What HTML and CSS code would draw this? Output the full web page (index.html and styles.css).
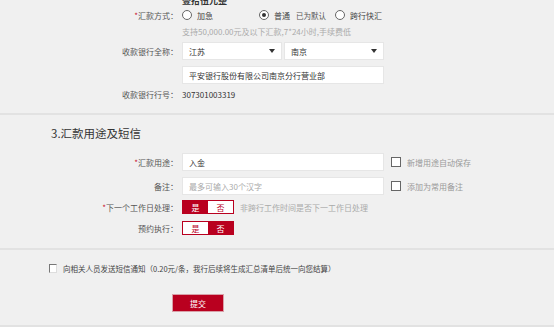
FILE: index.html
```html
<!DOCTYPE html>
<html lang="zh-CN">
<head>
  <meta charset="UTF-8">
  <title>汇款</title>
  <link rel="stylesheet" href="styles.css">
</head>
<body>
  <div class="page">
    <section class="block payee">
      <div class="row amount-row">
        <span class="label"></span>
        <b class="amount-cn">壹拾伍元整</b>
      </div>
      <div class="row mode-row">
        <span class="label"><i class="star">*</i>汇款方式：</span>
        <div class="options">
          <label class="opt first"><span class="radio"></span>加急</label>
          <label class="opt"><span class="radio on"></span>普通<small class="note">已为默认</small></label>
          <label class="opt"><span class="radio"></span>跨行快汇</label>
        </div>
      </div>
      <div class="row hint-row">
        <span class="label"></span>
        <span class="hint">支持50,000.00元及以下汇款,7*24小时,手续费低</span>
      </div>
      <div class="row select-row">
        <span class="label">收款银行全称：</span>
        <div class="selects">
          <div class="select">江苏<span class="caret"></span></div>
          <div class="select">南京<span class="caret"></span></div>
        </div>
      </div>
      <div class="row input-row">
        <span class="label"></span>
        <div class="input">平安银行股份有限公司南京分行营业部</div>
      </div>
      <div class="row code-row">
        <span class="label">收款银行行号：</span>
        <span class="value">307301003319</span>
      </div>
    </section>

    <section class="block usage">
      <h3 class="title">3.汇款用途及短信</h3>
      <div class="row field-row">
        <span class="label"><i class="star">*</i>汇款用途：</span>
        <div class="field">
          <div class="input">入金</div>
          <label class="check"><span class="box"></span>新增用途自动保存</label>
        </div>
      </div>
      <div class="row field-row memo">
        <span class="label">备注：</span>
        <div class="field">
          <div class="input placeholder">最多可输入30个汉字</div>
          <label class="check"><span class="box"></span>添加为常用备注</label>
        </div>
      </div>
      <div class="row toggle-row">
        <span class="label"><i class="star">*</i>下一个工作日处理：</span>
        <div class="field">
          <div class="toggle">
            <span class="seg on">是</span><span class="seg">否</span>
          </div>
          <span class="hint">非跨行工作时间是否下一工作日处理</span>
        </div>
      </div>
      <div class="row toggle-row second">
        <span class="label">预约执行：</span>
        <div class="toggle">
          <span class="seg">是</span><span class="seg on">否</span>
        </div>
      </div>
    </section>

    <section class="block sms">
      <label class="sms-check"><span class="box small"></span>向相关人员发送短信通知（0.20元/条，我行后续将生成汇总清单后统一向您结算）</label>
      <div class="actions">
        <button class="submit" type="button">提交</button>
      </div>
    </section>
  </div>
</body>
</html>
```

FILE: styles.css
```css
body {
  margin: 0;
  background: #fff;
  font-family: "Noto Sans CJK SC", "Noto Sans", sans-serif;
  font-size: 8px;
  color: #444;
  overflow: hidden;
}

.page {
  background: #f0f0f0;
}

.block {
  border-bottom: 2px solid #e2e2e2;
}

.row {
  display: grid;
  grid-template-columns: 178px auto;
  column-gap: 4px;
  align-items: center;
}

.label {
  text-align: right;
  color: #555;
  white-space: nowrap;
}

.star {
  font-style: normal;
  color: #c8102e;
}

/* 收款方 */
.payee {
  padding-bottom: 14px;
}

.amount-row {
  height: 12px;
  margin-top: -6px;
}

.amount-cn {
  font-size: 9px;
  font-weight: bold;
  color: #333;
}

.mode-row {
  height: 12px;
  margin-top: 3px;
}

.options {
  display: flex;
  align-items: center;
}

.opt {
  display: flex;
  align-items: center;
  margin-right: 9px;
  color: #444;
}

.opt.first {
  width: 63px;
  margin-right: 14px;
}

.radio {
  width: 8px;
  height: 8px;
  border: 1px solid #666;
  border-radius: 50%;
  background: #fff;
  margin-right: 5px;
  display: flex;
  align-items: center;
  justify-content: center;
}

.radio.on::after {
  content: "";
  width: 4px;
  height: 4px;
  border-radius: 50%;
  background: #333;
}

.note {
  font-size: 7.5px;
  color: #555;
  margin-left: 6px;
}

.hint {
  color: #aaa;
}

.hint-row {
  height: 10px;
  margin-top: 5px;
}

.select-row {
  height: 18px;
  margin-top: 6px;
}

.selects {
  display: flex;
  gap: 2px;
}

.select,
.input {
  box-sizing: border-box;
  height: 18px;
  background: #fff;
  border: 1px solid #e6e6e6;
  padding: 0 6px;
  display: flex;
  align-items: center;
  color: #333;
}

.select {
  width: 100px;
  justify-content: space-between;
}

.caret {
  width: 0;
  height: 0;
  border-left: 3px solid transparent;
  border-right: 3px solid transparent;
  border-top: 4px solid #333;
}

.input {
  width: 202px;
}

.input-row {
  height: 18px;
  margin-top: 6px;
}

.code-row {
  height: 10px;
  margin-top: 5px;
}

.value {
  color: #333;
}

/* 用途 */
.usage {
  padding-top: 11px;
  padding-bottom: 13px;
}

.title {
  margin: 0 0 0 51px;
  height: 14px;
  line-height: 14px;
  font-size: 11.5px;
  font-weight: normal;
  color: #333;
}

.field-row {
  height: 18px;
  margin-top: 13px;
}

.field-row.memo {
  margin-top: 6px;
}

.field {
  display: flex;
  align-items: center;
}

.placeholder {
  color: #aaa;
}

.check {
  display: flex;
  align-items: center;
  margin-left: 7px;
  color: #999;
}

.box {
  box-sizing: border-box;
  width: 10px;
  height: 10px;
  border: 1px solid #666;
  background: #fff;
  margin-right: 6px;
}

.toggle-row {
  height: 14px;
  margin-top: 5px;
}

.toggle-row.second {
  margin-top: 7px;
}

.toggle {
  display: flex;
  width: 52px;
  height: 14px;
  box-sizing: border-box;
  border: 1px solid #b9001f;
  background: #fff;
}

.seg {
  flex: 1;
  display: flex;
  align-items: center;
  justify-content: center;
  color: #b9001f;
}

.seg.on {
  background: #b9001f;
  color: #fff;
}

.toggle-row .hint {
  margin-left: 6px;
}

/* 短信 */
.sms {
  padding: 13px 0 13px 49px;
}

.sms-check {
  display: flex;
  align-items: center;
  height: 10px;
  font-size: 7.5px;
  color: #444;
}

.box.small {
  width: 8px;
  height: 9px;
  border-color: #777 #ddd #ddd #777;
}

.actions {
  margin-top: 21px;
  padding-left: 123px;
}

.submit {
  width: 52px;
  height: 18px;
  border: 1px solid #d9a0a8;
  background: #b9001f;
  color: #fff;
  font-family: inherit;
  font-size: 8px;
  padding: 0;
  display: block;
}
```
